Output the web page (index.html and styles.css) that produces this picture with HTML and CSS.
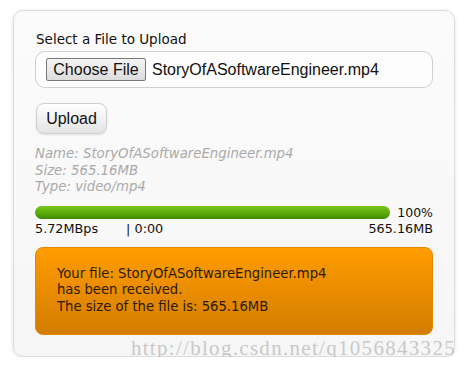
FILE: index.html
```html
<!DOCTYPE html>
<html>

<head>
    <title>File Upload</title>
    <meta charset="UTF-8">
    <link rel="stylesheet" href="styles.css">
</head>

<body>
    <div class="container">
        <form class="upload-form">
            <label class="upload-label">Select a File to Upload</label>
            <div class="file-box">
                <span class="choose-btn">Choose File</span>
                <span class="file-name">StoryOfASoftwareEngineer.mp4</span>
            </div>
            <button type="button" class="upload-btn">Upload</button>
            <div class="file-info">
                <div>Name: StoryOfASoftwareEngineer.mp4</div>
                <div>Size: 565.16MB</div>
                <div>Type: video/mp4</div>
            </div>
            <div class="progress-row">
                <div class="progress-track">
                    <div class="progress-bar" style="width: 100%"></div>
                </div>
                <span class="percent">100%</span>
            </div>
            <div class="stats-row">
                <span class="speed">5.72MBps</span>
                <span class="time">| 0:00</span>
                <span class="total">565.16MB</span>
            </div>
            <div class="result">
                Your file: StoryOfASoftwareEngineer.mp4<br>
                has been received.<br>
                The size of the file is: 565.16MB
            </div>
        </form>
        <div class="watermark">http://blog.csdn.net/q1056843325</div>
    </div>
</body>

</html>
```

FILE: styles.css
```css
body {
    margin: 0;
    background-color: #fff;
    font-family: "DejaVu Sans", Verdana, sans-serif;
}

.container {
    position: relative;
    padding: 10px 0 0 13px;
}

.upload-form {
    width: 398px;
    height: 305px;
    padding: 20px 21px 20px 21px;
    border: 1px solid #dcdcdc;
    border-radius: 10px;
    background: linear-gradient(to bottom, #fbfbfb, #f6f6f6);
    box-shadow: 0 1px 4px rgba(0, 0, 0, 0.12);
}

.upload-label {
    display: block;
    font-size: 13.5px;
    line-height: 17px;
    color: #111;
    margin-bottom: 3px;
    padding-left: 1px;
}

.file-box {
    display: flex;
    align-items: center;
    height: 35px;
    padding-left: 10px;
    border: 1px solid #cfcfcf;
    border-radius: 10px;
    background-color: #fdfdfd;
}

.choose-btn {
    display: inline-block;
    width: 98px;
    height: 21px;
    line-height: 21px;
    text-align: center;
    font-family: "Liberation Sans", Arial, sans-serif;
    font-size: 16px;
    color: #111;
    border: 1px solid #777;
    border-radius: 2px;
    background: linear-gradient(to bottom, #f4f4f4, #dcdcdc);
}

.file-name {
    margin-left: 6px;
    font-family: "Liberation Sans", Arial, sans-serif;
    font-size: 16px;
    color: #111;
}

.upload-btn {
    display: block;
    margin: 15px 0 12px 1px;
    width: 71px;
    height: 31px;
    padding: 0;
    font-family: "Liberation Sans", Arial, sans-serif;
    font-size: 16px;
    color: #111;
    border: 1px solid #cfcfcf;
    border-radius: 8px;
    background: linear-gradient(to bottom, #fefefe, #e4e4e4);
    box-shadow: 0 1px 2px rgba(0, 0, 0, 0.1);
}

.file-info {
    font-style: italic;
    font-size: 13.3px;
    line-height: 16.5px;
    color: #aaa;
}

.progress-row {
    display: flex;
    align-items: center;
    margin-top: 9px;
}

.progress-track {
    width: 355px;
    height: 13px;
    border-radius: 7px;
    background-color: #ddd;
}

.progress-bar {
    height: 100%;
    border-radius: 7px;
    background: linear-gradient(to bottom, #78c41a, #5aa80a 60%, #3f8a00);
}

.percent {
    margin-left: auto;
    font-size: 12.5px;
    color: #111;
}

.stats-row {
    display: flex;
    font-size: 12.8px;
    line-height: 16px;
    color: #111;
    margin-top: 1px;
}

.time {
    margin-left: 28px;
}

.total {
    margin-left: auto;
}

.result {
    margin-top: 10px;
    height: 50px;
    padding: 18px 21px;
    border: 1px solid #e08a00;
    border-radius: 8px;
    background: linear-gradient(to bottom, #ff9c00, #d47c00);
    font-size: 13.2px;
    line-height: 16.5px;
    color: #2a1a00;
}

.watermark {
    position: absolute;
    right: 10px;
    top: 336px;
    font-family: "Liberation Serif", "Times New Roman", serif;
    font-size: 21px;
    letter-spacing: 1.3px;
    color: rgba(180, 180, 180, 0.7);
    white-space: nowrap;
}
```
